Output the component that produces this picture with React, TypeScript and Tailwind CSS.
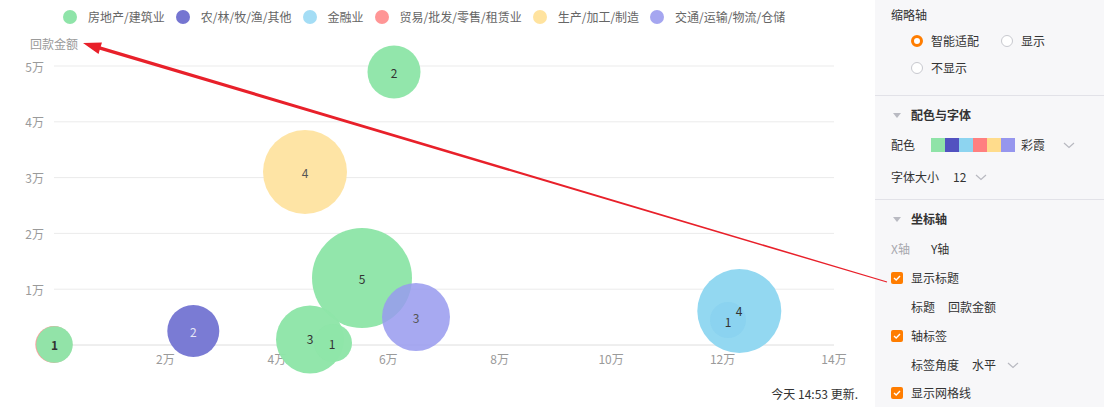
import React from "react";

const legend = [
  { c: "#8fe4a9", t: "房地产/建筑业" },
  { c: "#7575d1", t: "农/林/牧/渔/其他" },
  { c: "#a4ddf5", t: "金融业" },
  { c: "#ff9696", t: "贸易/批发/零售/租赁业" },
  { c: "#ffe39f", t: "生产/加工/制造" },
  { c: "#a5a6f0", t: "交通/运输/物流/仓储" },
];

const X0 = 54;
const XS = 55.714; // px per 万
const Y0 = 311;
const YS = 55.8;

const gridY = [0, 1, 2, 3, 4, 5].map((v) => Y0 - v * YS);
const xTicks = [2, 4, 6, 8, 10, 12, 14];

type Bubble = { x: number; y: number; r: number; fill: string; label: string; lx?: number; ly?: number; color?: string; bold?: boolean; op?: number };

const bubbles: Bubble[] = [
  { x: 53.8, y: 310.5, r: 18.5, fill: "#ff9999", label: "" },
  { x: 54.5, y: 310.5, r: 18.3, fill: "#8ee5a8", label: "1", bold: true },
  { x: 193.3, y: 297, r: 26, fill: "#7677d3", label: "2", color: "#e6e6f6" },
  { x: 305, y: 138, r: 42, fill: "#fee3a2", label: "4", color: "#555" },
  { x: 394, y: 38, r: 26.5, fill: "#8ee5a8", label: "2" },
  { x: 362, y: 244, r: 50, fill: "#8ee5a8", label: "5" },
  { x: 310, y: 305.5, r: 34, fill: "#8ee5a8", label: "3", ly: 304 },
  { x: 333, y: 309, r: 19, fill: "#8ee5a8", label: "1", lx: 332 },
  { x: 416, y: 283, r: 34, fill: "#989aee", label: "3", color: "#555", op: 0.85 },
  { x: 739.3, y: 277, r: 42, fill: "#90d7f1", label: "" },
  { x: 728, y: 286, r: 18, fill: "#8ad3ef", label: "1", ly: 287 },
];

function Chevron() {
  return (
    <svg width="12" height="7" viewBox="0 0 12 7" className="block">
      <polyline points="1,1 6,5.5 11,1" fill="none" stroke="#b8b9c1" strokeWidth="1.2" />
    </svg>
  );
}

function Caret() {
  return (
    <svg width="8" height="5" viewBox="0 0 8 5" className="block">
      <polygon points="0,0 8,0 4,5" fill="#b9bac2" />
    </svg>
  );
}

function Check() {
  return (
    <div className="w-3 h-3 rounded-[2px] bg-[#ff7d00] flex items-center justify-center">
      <svg width="8" height="6" viewBox="0 0 8 6">
        <polyline points="1,3 3.2,5 7,1" fill="none" stroke="#fff" strokeWidth="1.4" />
      </svg>
    </div>
  );
}

export default function App() {
  return (
    <div className="relative flex w-[1104px] h-[407px] bg-white overflow-hidden font-['Noto_Sans_CJK_SC','Noto_Sans',sans-serif]">
      {/* Chart area */}
      <div className="w-[875px] h-[407px] flex flex-col">
        <div className="h-[34px] flex items-center pl-[63px] gap-[11px]">
          {legend.map((l) => (
            <div key={l.t} className="flex items-center gap-[11px]">
              <div className="w-[14px] h-[14px] rounded-full" style={{ backgroundColor: l.c }} />
              <span className="text-[12px] text-[#666] leading-none">{l.t}</span>
            </div>
          ))}
        </div>
        <svg width="875" height="341" className="block">
          <text x="30" y="9" fontSize="12" fill="#9a9a9a" dominantBaseline="central">
            回款金额
          </text>
          {gridY.map((y, i) => (
            <g key={i}>
              <line x1={X0} x2={834} y1={y} y2={y} stroke={i === 0 ? "#dedede" : "#ebebeb"} strokeWidth="1" />
              <text x="44" y={y} fontSize="12" fill="#9a9a9a" textAnchor="end" dominantBaseline="central">
                {i === 0 ? "" : `${i}万`}
              </text>
            </g>
          ))}
          {xTicks.map((v) => (
            <text key={v} x={X0 + v * XS} y={324} fontSize="12" fill="#9a9a9a" textAnchor="middle" dominantBaseline="central">
              {v}万
            </text>
          ))}
          {bubbles.map((b, i) => (
            <g key={i}>
              <circle cx={b.x} cy={b.y} r={b.r} fill={b.fill} fillOpacity={b.op ?? 0.97} />
              {b.label && (
                <text
                  x={b.lx ?? b.x}
                  y={b.ly ?? b.y}
                  fontSize="12"
                  fill={b.color ?? "#333"}
                  fontWeight={b.bold ? 700 : 400}
                  textAnchor="middle"
                  dominantBaseline="central"
                >
                  {b.label}
                </text>
              )}
            </g>
          ))}
          <text x={739} y={276} fontSize="12" fill="#333" textAnchor="middle" dominantBaseline="central">
            4
          </text>
        </svg>
        <div className="mt-[7px] h-6 flex items-center justify-end pr-[17px] text-[12px] text-[#333]">
          今天 14:53 更新.
        </div>
      </div>

      {/* Settings panel */}
      <div className="flex-1 h-[407px] bg-[#f7f7f9] text-[12px] text-[#333] leading-none">
        <div className="pl-4 pt-[3px] h-[27px] flex items-center">缩略轴</div>
        <div className="mt-[2px] h-6 pl-[36px] flex items-center">
          <div className="w-3 h-3 rounded-full border-[3px] border-[#ff7d00] bg-white" />
          <span className="ml-2">智能适配</span>
          <div className="ml-[22px] w-3 h-3 rounded-full border border-[#c8c9cf] bg-white" />
          <span className="ml-2">显示</span>
        </div>
        <div className="mt-[3px] h-6 pl-[36px] flex items-center">
          <div className="w-3 h-3 rounded-full border border-[#c8c9cf] bg-white" />
          <span className="ml-2">不显示</span>
        </div>
        <div className="mt-[15px] h-px bg-[#e2e2e8]" />
        <div className="mt-[7px] h-6 pl-[18px] flex items-center">
          <Caret />
          <span className="ml-[10px] font-bold">配色与字体</span>
        </div>
        <div className="mt-[6px] h-6 pl-4 flex items-center">
          <span className="w-[40px]">配色</span>
          <div className="flex h-[14px]">
            <div className="w-[14px] h-[14px] bg-[#8fe3a8]" />
            <div className="w-[14px] h-[14px] bg-[#5252c0]" />
            <div className="w-[14px] h-[14px] bg-[#8dd4f0]" />
            <div className="w-[14px] h-[14px] bg-[#ff8080]" />
            <div className="w-[14px] h-[14px] bg-[#ffdc8c]" />
            <div className="w-[14px] h-[14px] bg-[#9696ee]" />
          </div>
          <span className="ml-[6px]">彩霞</span>
          <div className="ml-[18px]">
            <Chevron />
          </div>
        </div>
        <div className="mt-[8px] h-6 pl-4 flex items-center">
          <span>字体大小</span>
          <span className="ml-[14px]">12</span>
          <div className="ml-[9px]">
            <Chevron />
          </div>
        </div>
        <div className="mt-[10px] h-px bg-[#e2e2e8]" />
        <div className="mt-[7px] h-6 pl-[18px] flex items-center">
          <Caret />
          <span className="ml-[10px] font-bold">坐标轴</span>
        </div>
        <div className="mt-[6px] h-6 pl-4 flex items-center">
          <span className="w-[40px] text-[#a8a8ae]">X轴</span>
          <span>Y轴</span>
        </div>
        <div className="mt-[5px] h-6 pl-4 flex items-center">
          <Check />
          <span className="ml-2">显示标题</span>
        </div>
        <div className="mt-[5px] h-6 pl-[36px] flex items-center">
          <span>标题</span>
          <span className="ml-[13px]">回款金额</span>
        </div>
        <div className="mt-[5px] h-6 pl-4 flex items-center">
          <Check />
          <span className="ml-2">轴标签</span>
        </div>
        <div className="mt-[5px] h-6 pl-[36px] flex items-center">
          <span>标签角度</span>
          <span className="ml-[13px]">水平</span>
          <div className="ml-[11px]">
            <Chevron />
          </div>
        </div>
        <div className="mt-[4px] h-6 pl-4 flex items-center">
          <Check />
          <span className="ml-2">显示网格线</span>
        </div>
      </div>

      {/* Red annotation arrow */}
      <svg width="1104" height="407" className="absolute left-0 top-0 pointer-events-none">
        <polygon
          points="83,43 101.96,42.38 100.75,46.45 887.17,281.43 886.83,282.58 99.75,49.81 98.54,53.88"
          fill="#e8202a"
        />
      </svg>
    </div>
  );
}
